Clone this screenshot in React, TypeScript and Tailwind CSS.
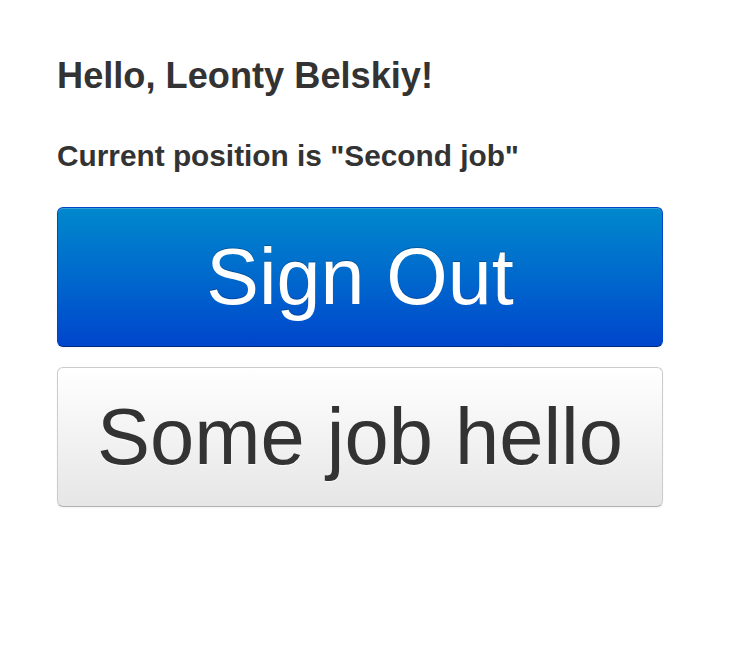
export default function App() {
  return (
    <div className="min-h-screen bg-white px-[57px] pt-[56px] text-[#333333] [font-family:'Liberation_Sans',Arial,sans-serif]">
      <h2 className="text-[36.2px] font-bold leading-[40px]">Hello, Leonty Belskiy!</h2>
      <h3 className="mt-[42px] text-[29.8px] font-bold leading-[36px]">Current position is "Second job"</h3>

      <div className="mt-[33px] flex w-[606px] flex-col gap-[20px]">
        <button className="flex h-[140px] items-center justify-center rounded-[6px] border border-[#0044cc] border-b-[#002a80] bg-gradient-to-b from-[#0088cc] to-[#0044cc] text-[79px] leading-[80px] text-white shadow-[inset_0_1px_0_rgba(255,255,255,0.2),0_1px_2px_rgba(0,0,0,0.05)] [text-shadow:0_-1px_0_rgba(0,0,0,0.25)]">
          Sign Out
        </button>
        <button className="flex h-[140px] items-center justify-center rounded-[6px] border border-[#cccccc] border-b-[#b3b3b3] bg-gradient-to-b from-[#ffffff] to-[#e6e6e6] text-[79.5px] leading-[80px] text-[#333333] shadow-[inset_0_1px_0_rgba(255,255,255,0.2),0_1px_2px_rgba(0,0,0,0.05)] [text-shadow:0_1px_1px_rgba(255,255,255,0.75)]">
          Some job hello
        </button>
      </div>
    </div>
  );
}
